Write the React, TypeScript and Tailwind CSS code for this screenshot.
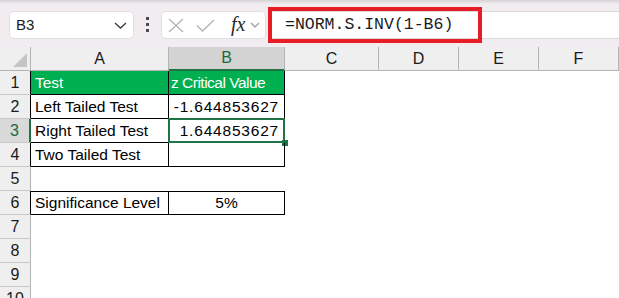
import React from 'react';

const cols = ['A', 'B', 'C', 'D', 'E', 'F'];

type Cell = { text?: string; align?: 'left' | 'right' | 'center'; num?: boolean };

const rows: { a?: Cell; b?: Cell; table: boolean; head?: boolean }[] = [
  { a: { text: 'Test' }, b: { text: 'z Critical Value' }, table: true, head: true },
  { a: { text: 'Left Tailed Test' }, b: { text: '-1.644853627', align: 'right', num: true }, table: true },
  { a: { text: 'Right Tailed Test' }, b: { text: '1.644853627', align: 'right', num: true }, table: true },
  { a: { text: 'Two Tailed Test' }, b: {}, table: true },
  { table: false },
  { a: { text: 'Significance Level' }, b: { text: '5%', align: 'center' }, table: true },
  { table: false },
  { table: false },
  { table: false },
  { table: false },
];

function FormulaBar() {
  return (
    <div className="relative h-[47px] bg-[#f0ecef] flex items-start">
      <div className="absolute top-0 left-0 right-0 h-[4px] bg-gradient-to-b from-[#d6d1d5] to-[#f0ecef]" />
      <div className="mt-[11px] ml-[9px] w-[125px] h-[28px] bg-white rounded-[5px] border border-[#e2dee1] flex items-center justify-between pl-[6px] pr-[6px]">
        <span className="text-[15px] text-[#1a1a1a]">B3</span>
        <svg width="13" height="7" viewBox="0 0 13 7" className="mt-[1px]">
          <polyline points="1,1 6.5,6 12,1" fill="none" stroke="#3a3a3a" strokeWidth="1.3" />
        </svg>
      </div>
      <div className="w-[27px] h-[47px] flex flex-col items-center justify-center gap-[3px] pt-[2px]">
        <div className="w-[3px] h-[3px] bg-[#4a4a4a]" />
        <div className="w-[3px] h-[3px] bg-[#4a4a4a]" />
        <div className="w-[3px] h-[3px] bg-[#4a4a4a]" />
      </div>
      <div className="mt-[11px] w-[105px] h-[28px] bg-white rounded-[5px] border border-[#e2dee1] flex items-center pl-[6px]">
        <svg width="17" height="15" viewBox="0 0 17 15">
          <path d="M1 1 L15 14 M15 1 L1 14" stroke="#b3b3b3" strokeWidth="1.3" fill="none" />
        </svg>
        <svg width="19" height="13" viewBox="0 0 19 13" className="ml-[11px]">
          <polyline points="1,6.5 6.5,12 18,1" stroke="#b3b3b3" strokeWidth="1.3" fill="none" />
        </svg>
        <span className="ml-[16px] italic text-[20px] leading-none text-[#2a2a2a] font-['Liberation_Serif',serif] -mt-[3px]">fx</span>
        <svg width="10" height="6" viewBox="0 0 10 6" className="ml-[5px]">
          <polyline points="1,1 5,5 9,1" fill="none" stroke="#9a9a9a" strokeWidth="1.2" />
        </svg>
      </div>
      <div className="relative mt-[11px] ml-[3px] flex-1 h-[28px] bg-white border-y border-[#dcd8db] flex items-center pl-[16px]">
        <span className="font-['Liberation_Mono',monospace] text-[16.5px] text-[#1c1c1c]">=NORM.S.INV(1-B6)</span>
        <div className="absolute left-[-1px] top-[-5px] w-[214px] h-[36px] border-[4px] border-[#e81c24]" />
      </div>
    </div>
  );
}

export default function App() {
  return (
    <div className="w-[619px] h-[298px] overflow-hidden bg-white font-['Liberation_Sans',Arial,sans-serif]">
      <FormulaBar />
      <div className="grid grid-cols-[31px_138px_116px_94px_80px_80px_80px] grid-rows-[24px_repeat(10,24px)]">
        <div className="relative bg-[#efefef] border-r border-b border-[#b4b4b4]">
          <div className="absolute right-[3px] bottom-[3px] w-0 h-0 border-l-[14px] border-l-transparent border-b-[14px] border-b-[#c4c4c4]" />
        </div>
        {cols.map((c) => (
          <div
            key={c}
            className={
              c === 'B'
                ? 'flex items-center justify-center text-[16px] bg-[#d3d3d3] text-[#1d6b3c] border-r border-[#b4b4b4] border-b-2 border-b-[#217346]'
                : 'flex items-center justify-center text-[16px] bg-[#efefef] text-[#1a1a1a] border-r border-b border-[#b4b4b4]'
            }
          >
            {c}
          </div>
        ))}
        {rows.map((r, i) => {
          const n = i + 1;
          const sel = n === 3;
          const rh =
            'flex items-center justify-center text-[16px] border-b border-[#c6c6c6] border-r ' +
            (sel ? 'bg-[#d9d9d9] text-[#1d6b3c] border-r-[#217346] border-r-2' : 'bg-[#efefef] text-[#1a1a1a] ') +
            (!sel && r.table ? 'border-r-black' : !sel ? 'border-r-[#b4b4b4]' : '');
          const base = r.table ? 'border-r border-b border-black ' : '';
          const top = n === 6 ? 'border-t border-t-black ' : '';
          const fill = r.head ? 'bg-[#00b050] text-white ' : 'text-black ';
          return (
            <React.Fragment key={n}>
              <div className={rh}>{n}</div>
              <div className={base + top + fill + 'flex items-center pl-[4px] text-[15.5px] whitespace-nowrap overflow-hidden'}>
                {r.a?.text}
              </div>
              <div
                className={
                  base +
                  top +
                  fill +
                  'relative flex items-center whitespace-nowrap ' +
                  (r.b?.align === 'right'
                    ? 'justify-end pr-[5px] tracking-[0.8px] text-[15.5px]'
                    : r.b?.align === 'center'
                    ? 'justify-center text-[15.5px]'
                    : 'pl-[2px] text-[15.5px] tracking-[-0.5px]')
                }
              >
                {r.b?.text}
                {sel && (
                  <>
                    <div className="absolute -left-px -top-px -right-px -bottom-px border-2 border-[#217346]" />
                    <div className="absolute -right-[4px] -bottom-[4px] w-[6px] h-[6px] bg-[#217346]" />
                  </>
                )}
              </div>
              <div />
              <div />
              <div />
              <div />
            </React.Fragment>
          );
        })}
      </div>
    </div>
  );
}
